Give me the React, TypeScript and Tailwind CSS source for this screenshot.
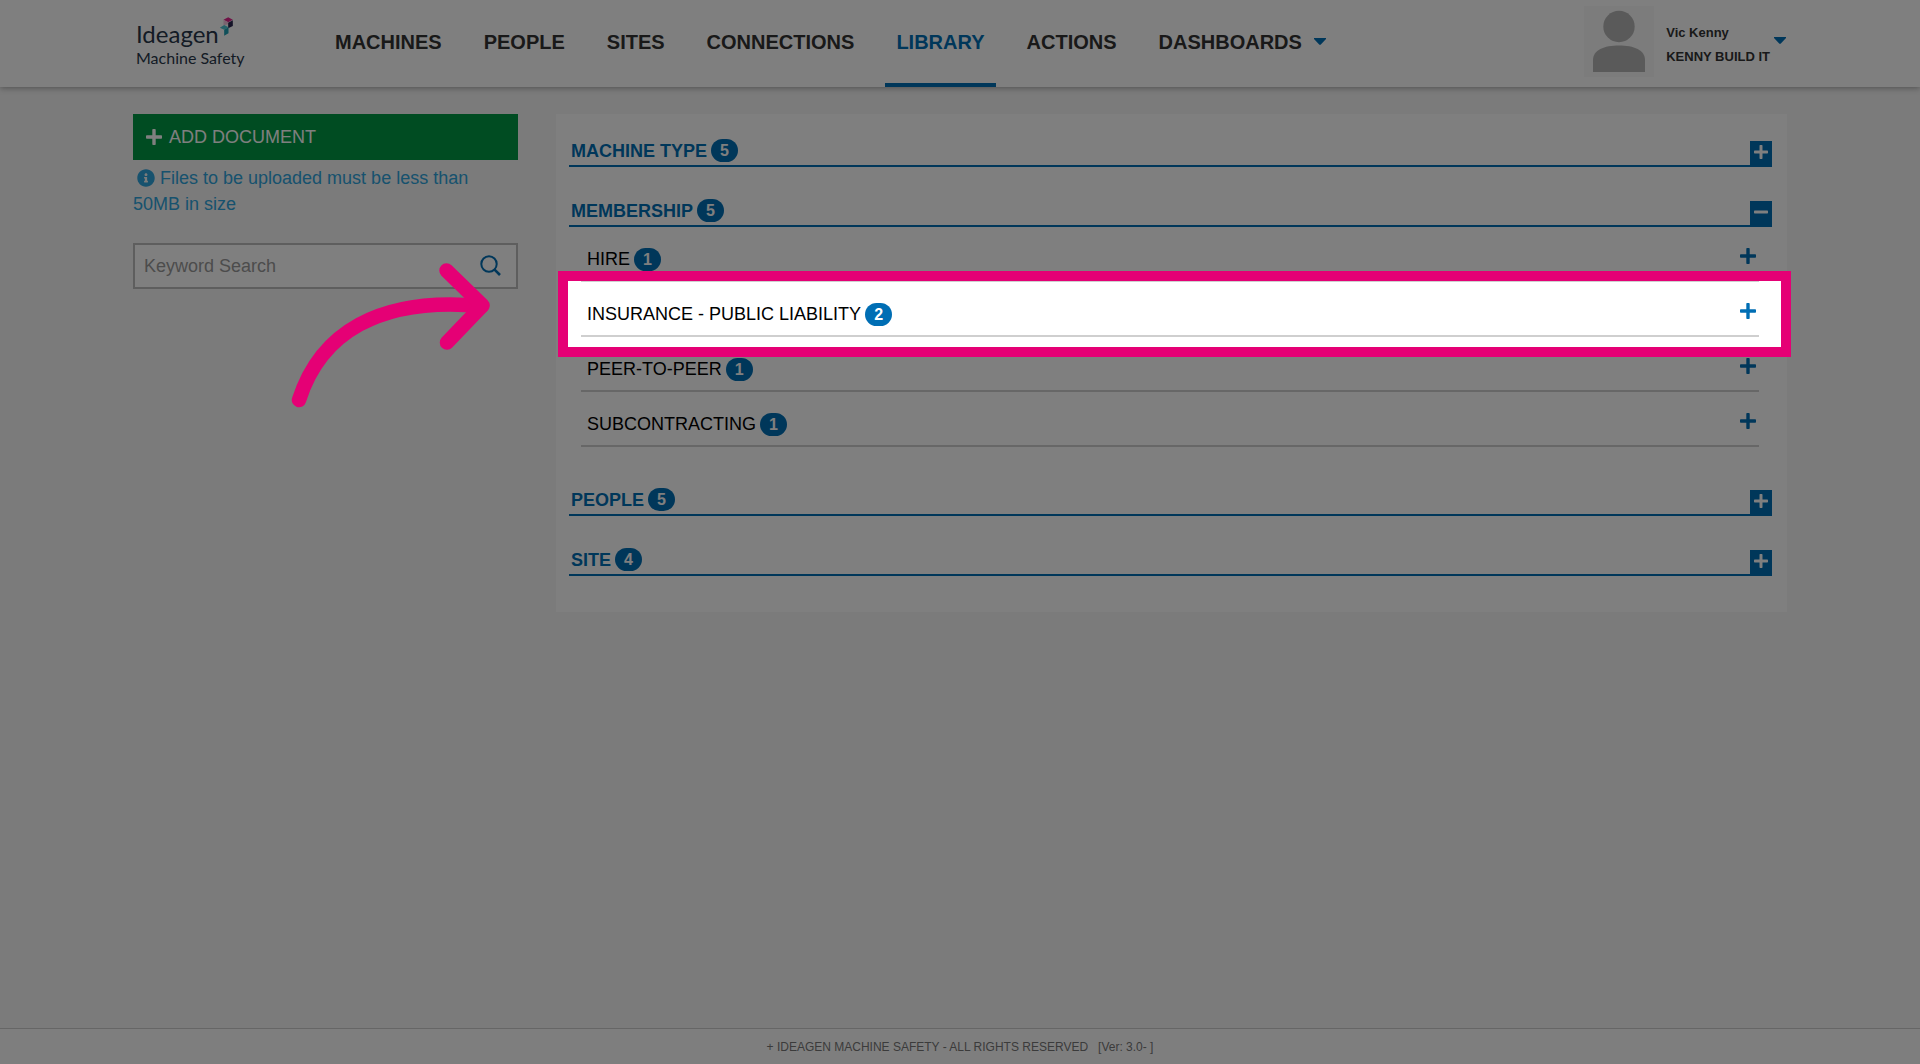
import { useState } from 'react';
import clsx from 'clsx';
import { FaInfoCircle } from 'react-icons/fa';

const NAV_ITEMS = ['MACHINES', 'PEOPLE', 'SITES', 'CONNECTIONS', 'LIBRARY', 'ACTIONS', 'DASHBOARDS'];

interface Category {
  name: string;
  count: number;
}

interface Section extends Category {
  children?: Category[];
}

const SECTIONS: Section[] = [
  { name: 'MACHINE TYPE', count: 5 },
  {
    name: 'MEMBERSHIP',
    count: 5,
    children: [
      { name: 'HIRE', count: 1 },
      { name: 'INSURANCE - PUBLIC LIABILITY', count: 2 },
      { name: 'PEER-TO-PEER', count: 1 },
      { name: 'SUBCONTRACTING', count: 1 },
    ],
  },
  { name: 'PEOPLE', count: 5 },
  { name: 'SITE', count: 4 },
];

// Row the walkthrough points at
const SPOTLIGHT = 'INSURANCE - PUBLIC LIABILITY';

function PlusIcon({ size, minus = false }: { size: number; minus?: boolean }) {
  return (
    <svg width={size} height={size} viewBox="0 0 16 16" fill="currentColor" aria-hidden="true">
      <rect x="0" y="6.3" width="16" height="3.4" rx="0.8" />
      {!minus && <rect x="6.3" y="0" width="3.4" height="16" rx="0.8" />}
    </svg>
  );
}

function Caret() {
  return (
    <svg width="12" height="7" viewBox="0 0 12 7" fill="#006eb4" aria-hidden="true">
      <path d="M0 0h12v1L6.6 6.7h-1.2L0 1z" />
    </svg>
  );
}

function Badge({ count }: { count: number }) {
  return (
    <span className="ml-1 flex h-[23px] w-[27px] items-center justify-center rounded-full bg-[#006eb4] text-base font-bold text-white">
      {count}
    </span>
  );
}

function Logo() {
  return (
    <a href="#home" className="flex w-[198px] shrink-0 flex-col pl-[3px] pt-[17px] font-['Lato',sans-serif] text-[#28374a]">
      <span className="flex h-[31px] items-start">
        <span className="pt-[3px] text-2xl leading-7">Ideagen</span>
        <svg width="15" height="20" viewBox="293 49 44 60" aria-hidden="true">
          <path d="M306 57l14-7 14 7-14 8z" fill="#e0248c" />
          <path d="M306 57l14 8v6l-14 3z" fill="#f4c6de" />
          <path d="M320 66l14-7v17l-14 7z" fill="#2a2750" />
          <path d="M295 81l13-8 13 7-13 7z" fill="#4fc4d0" />
          <path d="M308 87l13-7v18l-13 7z" fill="#1fa0b4" />
        </svg>
      </span>
      <span className="text-base leading-5">Machine Safety</span>
    </a>
  );
}

function Header() {
  return (
    <header className="flex h-[87px] shrink-0 bg-white px-[133px] shadow-[0_1px_6px_rgba(0,0,0,0.35)]">
      <Logo />
      <nav className="-ml-[7px] flex gap-5">
        {NAV_ITEMS.map((item) => (
          <a
            key={item}
            href={`#${item.toLowerCase()}`}
            className={clsx(
              'flex items-center gap-3 border-b-4 px-[11px] text-xl font-bold',
              item === 'LIBRARY' ? 'border-[#006eb4] text-[#006eb4]' : 'border-transparent text-[#333]',
            )}
          >
            {item}
            {item === 'DASHBOARDS' && <Caret />}
          </a>
        ))}
      </nav>
      <button className="ml-auto flex pt-[6px] text-left text-[13px] font-bold leading-6 text-[#333]">
        <svg width="70" height="71" viewBox="0 0 70 71" aria-hidden="true">
          <path d="M0 0h70v71H0z" fill="#f9f9f9" />
          <circle cx="35" cy="20.5" r="15.7" fill="#b5b5b5" />
          <path d="M9 66V54C9 44 20 39.500 35 39.500S61 44 61 54v12z" fill="#b5b5b5" />
        </svg>
        <span className="ml-3 flex flex-col pt-[15px]">
          <span>Vic Kenny</span>
          <span>KENNY BUILD IT</span>
        </span>
        <span className="ml-1 pt-[31px] pr-px">
          <Caret />
        </span>
      </button>
    </header>
  );
}

function Arrow() {
  return (
    <svg
      className="pointer-events-none absolute left-[157px] top-[146px] z-20"
      width="202"
      height="152"
      viewBox="290 260 202 152"
      fill="none"
      stroke="#e50075"
      strokeWidth="14.5"
      strokeLinecap="round"
      strokeLinejoin="round"
      aria-hidden="true"
    >
      <path d="M299 400C320 334 378 296 482 306" />
      <path d="M446.500 270.500L482.500 305.500 447 342.500" />
    </svg>
  );
}

function Sidebar() {
  const [keyword, setKeyword] = useState('');

  return (
    <aside className="relative w-[385px] shrink-0">
      <button className="flex h-[46px] w-full items-center gap-[7px] bg-[#009844] pb-px pl-[13px] text-lg text-white">
        <PlusIcon size={16} />
        ADD DOCUMENT
      </button>
      <p className="pr-4 pt-[5px] text-lg leading-[26px] text-[#2fa4dc]">
        <FaInfoCircle className="ml-1 inline-block size-[18px] -translate-y-px" /> Files to be uploaded must be
        less than 50MB in size
      </p>
      <div className="mt-[26px] flex h-[46px] items-center border-2 border-[#bdbdbd] bg-white pb-px">
        <input
          type="text"
          aria-label="Keyword Search"
          placeholder="Keyword Search"
          value={keyword}
          onChange={(e) => setKeyword(e.target.value)}
          className="min-w-0 flex-1 bg-transparent pl-[9px] text-lg outline-none placeholder:text-[#999]"
        />
        <button aria-label="Search" className="mr-[15px] text-[#006eb4]">
          <svg width="21" height="21" viewBox="0 0 21 21" fill="none" stroke="currentColor" strokeWidth="2">
            <circle cx="9" cy="9" r="7.700" />
            <path d="M14.300 14.300L20 20" strokeWidth="2.600" />
          </svg>
        </button>
      </div>
      <Arrow />
    </aside>
  );
}

function CategoryRow({ name, count }: Category) {
  return (
    <li className="relative">
      <button className="flex h-[55px] w-full items-end border-b-2 border-[#cfcfcf] pb-[9px] pl-[6px] pr-[3px] text-lg leading-6 text-black">
        {name}
        <Badge count={count} />
        <span className="ml-auto pb-[7px] text-[#006eb4]">
          <PlusIcon size={16} />
        </span>
      </button>
      {name === SPOTLIGHT && (
        <div className="pointer-events-none absolute -bottom-5 -left-[23px] -right-[32px] -top-[11px] z-10 border-[10px] border-[#e50075] shadow-[0_0_0_9999px_rgba(0,0,0,0.5)]" />
      )}
    </li>
  );
}

function SectionBlock({ section }: { section: Section }) {
  const [open, setOpen] = useState(Boolean(section.children));

  return (
    <section>
      <button
        onClick={() => setOpen(!open)}
        aria-expanded={open}
        className="flex h-[28px] w-full items-start border-b-2 border-[#006eb4] pl-[2px] text-lg font-bold leading-6 text-[#006eb4]"
      >
        {section.name}
        <Badge count={section.count} />
        <span className="ml-auto flex h-6 w-[22px] items-center justify-center self-end bg-[#006eb4] pb-[2px] text-white">
          <PlusIcon size={14} minus={open} />
        </span>
      </button>
      {open && section.children && (
        <ul className="pb-[9px] pl-3 pr-[13px]">
          {section.children.map((child) => (
            <CategoryRow key={child.name} {...child} />
          ))}
        </ul>
      )}
    </section>
  );
}

export default function App() {
  return (
    <div className="relative flex min-h-screen flex-col overflow-hidden bg-[#f6f6f6] font-['Liberation_Sans',Arial,sans-serif]">
      <Header />
      <main className="flex flex-1 items-start gap-[38px] px-[133px] pt-[27px]">
        <Sidebar />
        <div className="flex flex-1 flex-col gap-8 bg-white pb-9 pl-[13px] pr-[15px] pt-[25px]">
          {SECTIONS.map((section) => (
            <SectionBlock key={section.name} section={section} />
          ))}
        </div>
      </main>
      <footer className="flex h-9 items-center justify-center gap-[10px] border-t border-[#ccc] bg-[#fdfdfd] text-xs text-[#777]">
        <span>+ IDEAGEN MACHINE SAFETY - ALL RIGHTS RESERVED</span>
        <span>[Ver: 3.0- ]</span>
      </footer>
    </div>
  );
}
